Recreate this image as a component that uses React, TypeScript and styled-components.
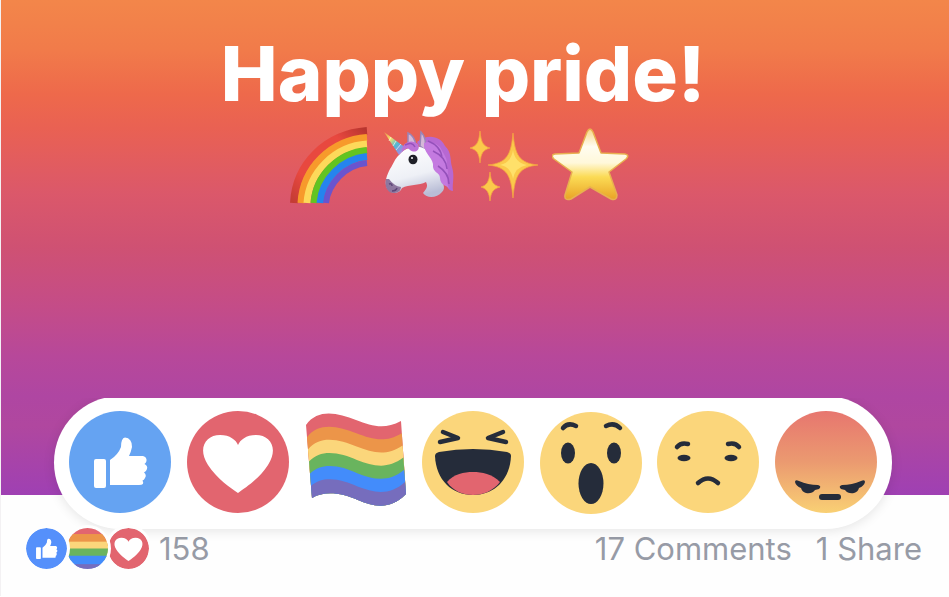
import React from "react";
import styled, { createGlobalStyle } from "styled-components";

const GlobalStyle = createGlobalStyle`
  * { box-sizing: border-box; }
  body { margin: 0; background: #fefefe; font-family: Inter, "Liberation Sans", sans-serif; }
`;

const Post = styled.article`
  border-left: 1px solid #f3f1f3;
  overflow: hidden;
`;
const Stage = styled.div`
  position: relative;
`;
const Hero = styled.section`
  display: flex;
  flex-direction: column;
  align-items: center;
  min-height: 495px;
  padding: 28px 24px 150px 0;
  background: linear-gradient(
    #f3864a 0%, #f17b4a 10%, #ee694b 19%, #e96153 26%, #db586a 39%,
    #cf5173 50%, #c44c88 62%, #b7489a 72%, #af46a2 80%, #b0479f 86%, #9f40b3 100%
  );
`;
const Title = styled.h1`
  margin: 0;
  color: #fff;
  font-size: 76px;
  font-weight: 800;
  line-height: 90px;
`;
const EmojiLine = styled.div`
  display: flex;
  gap: 8px;
  margin: 6px 6px 0 0;
`;
const Emoji = styled.svg`
  width: 80px;
  height: 84px;
  display: block;
`;
const Picker = styled.div`
  position: absolute;
  left: 53px;
  right: 57px;
  bottom: -34px;
  display: flex;
  align-items: center;
  justify-content: space-between;
  height: 133px;
  padding: 0 15px 1px;
  border-radius: 67px;
  background: #fff;
  box-shadow: 0 2px 12px rgba(0, 0, 0, 0.1);
  clip-path: inset(2px -24px -24px -24px);
`;
const Reaction = styled.button`
  width: 102px;
  height: 102px;
  padding: 0;
  border: 0;
  background: none;
  cursor: pointer;
`;
const Drawing = styled.svg`
  display: block;
  width: 100%;
  height: 100%;
  overflow: visible;
`;
const Footer = styled.footer`
  display: flex;
  align-items: center;
  justify-content: space-between;
  padding: 30px 27px 24px 22px;
  color: #979ba6;
  font-size: 31px;
  line-height: 46px;
`;
const Summary = styled.div`
  display: flex;
  align-items: center;
`;
const Badge = styled.span<{ $layer: number }>`
  position: relative;
  z-index: ${(p) => p.$layer};
  width: 47px;
  height: 47px;
  margin-right: -6px;
  border: 3px solid #fefefe;
  border-radius: 50%;
  overflow: hidden;
`;
const Count = styled.span`
  margin-left: 13px;
`;
const Links = styled.nav`
  display: flex;
  gap: 24px;
`;
const FooterLink = styled.a`
  color: inherit;
  text-decoration: none;
`;

const INK = "#252c3a";

const Thumb = () => (
  <g fill="#fff">
    <rect x="25" y="48" width="12" height="29" rx="2" />
    <path d="M41 49Q49 44 52 36Q52 27 56 26.500Q63 27 63 36Q62 41 60 45H74Q78 46 77.500 50Q77 52 75.500 53Q79 55 78 58Q77 61 75 61.500Q78 64 76 67Q75 69 73.500 69.500Q76 74 70 74H41Z" />
  </g>
);
const Like = ({ color = "#65a3f2" }: { color?: string }) => (
  <Drawing viewBox="0 0 102 102" aria-hidden>
    <circle cx="51" cy="51" r="51" fill={color} />
    <Thumb />
  </Drawing>
);
const Love = () => (
  <Drawing viewBox="0 0 102 102" aria-hidden>
    <circle cx="51" cy="51" r="51" fill="#e2656f" />
    <path d="M51 82C44 77 30 68 21 54C10 37 19 24 33 24C43 24 49 29 51 34C53 29 59 24 69 24C83 24 92 37 81 54C72 68 58 77 51 82Z" fill="#fff" />
  </Drawing>
);

const STRIPES = ["#e2656f", "#ec9549", "#fbd67b", "#69b45e", "#438cfb", "#766dbd"];

// Top edge of stripe i, from the pole side to the free side.
const waveTop = (i: number) => {
  const y = 13.3 * i;
  return `M${2 + i} ${14 + 12.2 * i}C${14 + i} ${-3 + y} ${34 + i} ${2 + y} ${52 + i * 0.3} ${9 + y}C${68 + i * 0.3} ${15 + y} ${80 + i} ${19 + y} ${97 + i * 0.8} ${10 + 12.2 * i}`;
};
const FLAG_BASE = "L102 83C86 99 70 96 54 89C38 82 21 79 8 87Z";

const Flag = () => (
  <Drawing viewBox="0 0 102 102" aria-hidden>
    {STRIPES.map((color, i) => (
      <path key={color} fill={color} d={waveTop(i) + FLAG_BASE} />
    ))}
  </Drawing>
);
const FlagBadge = () => (
  <Drawing viewBox="0 0 102 102" aria-hidden>
    {STRIPES.map((color, i) => (
      <rect key={color} y={[0, 15, 34, 51, 69, 90][i]} width="102" height="30" fill={color} />
    ))}
  </Drawing>
);
const Haha = () => (
  <Drawing viewBox="0 0 102 102" aria-hidden>
    <circle cx="51" cy="51" r="51" fill="#fbd67b" />
    <path d="M21 21L36 27L18 31M81 21L66 27L84 31" fill="none" stroke={INK} strokeWidth="4.500" strokeLinecap="round" strokeLinejoin="round" />
    <path d="M13 45Q13 42 17 41Q51 35 85 41Q89 42 89 45C88 69 72 84 51 84S14 69 13 45Z" fill={INK} />
    <path d="M25 71C32 63 42 61 51 61S70 63 78 71C71 80 61 84 51 84S31 80 25 71Z" fill="#e2656f" />
  </Drawing>
);
const Wow = () => (
  <Drawing viewBox="0 0 102 102" aria-hidden>
    <circle cx="51" cy="52" r="51" fill="#fbd67b" />
    <path d="M23 17Q28 11 36 15M66 15Q74 11 80 17" fill="none" stroke={INK} strokeWidth="4.500" strokeLinecap="round" />
    <g fill={INK}>
      <ellipse cx="28" cy="42" rx="7" ry="10.500" />
      <ellipse cx="74" cy="42" rx="7" ry="10.500" />
      <ellipse cx="51" cy="72.500" rx="12.500" ry="20.500" />
    </g>
  </Drawing>
);
const Sad = () => (
  <Drawing viewBox="0 0 102 102" aria-hidden>
    <circle cx="51" cy="51" r="51" fill="#fbd67b" />
    <path d="M20 36Q24 31 31 33M71 33Q78 31 82 36M41 72Q51 63 61 72" fill="none" stroke={INK} strokeWidth="4.500" strokeLinecap="round" />
    <ellipse cx="27" cy="47" rx="6.500" ry="3.200" fill={INK} />
    <ellipse cx="74" cy="47" rx="6.500" ry="3.200" fill={INK} />
  </Drawing>
);
const Angry = () => (
  <Drawing viewBox="0 0 102 102" aria-hidden>
    <defs>
      <linearGradient id="anger" x2="0" y2="1">
        <stop stopColor="#e7766f" />
        <stop offset="0.500" stopColor="#eb9a70" />
        <stop offset="1" stopColor="#f9d074" />
      </linearGradient>
    </defs>
    <circle cx="51" cy="51" r="51" fill="url(#anger)" />
    <path d="M20 71Q20 68 24 70Q33 74 43 74Q47 75 44 78L40 79Q37 83 31 82Q27 81 26 77Q21 75 20 71ZM90 71Q90 68 86 70Q77 74 67 74Q63 75 66 78L70 79Q73 83 79 82Q83 81 84 77Q89 75 90 71Z" fill={INK} />
    <rect x="44" y="83" width="22" height="6" rx="3" fill={INK} />
  </Drawing>
);

const Rainbow = () => (
  <Emoji viewBox="0 0 80 84" role="img" aria-label="Rainbow">
    <defs>
      <linearGradient id="redArc" x1="0" y1="1" x2="1" y2="0">
        <stop stopColor="#c43c34" />
        <stop offset="0.250" stopColor="#e8483f" />
        <stop offset="0.750" stopColor="#e8483f" />
        <stop offset="1" stopColor="#b8352f" />
      </linearGradient>
    </defs>
    <g fill="none" strokeWidth="7">
      <path d="M6 79C8 40 38 10 79 7" stroke="url(#redArc)" strokeWidth="8" />
      <path d="M13 79C15 44 43 16 79 13.500" stroke="#f79a2b" />
      <path d="M19 79C21 48 47 22 79 20" stroke="#fdd95a" />
      <path d="M26 79C28 52 50 29 79 26.500" stroke="#63c421" />
      <path d="M32 79C34 55 54 35 79 32.500" stroke="#2584ee" />
      <path d="M38 79C40 60 57 41 79 39" stroke="#6a54ce" strokeWidth="6" />
    </g>
  </Emoji>
);
const Unicorn = () => (
  <Emoji viewBox="-5 0 80 84" role="img" aria-label="Unicorn">
    <defs>
      <linearGradient id="coat" x1="0.200" y1="0" x2="0.500" y2="1">
        <stop stopColor="#fff" />
        <stop offset="0.600" stopColor="#eef0f6" />
        <stop offset="1" stopColor="#b9bdd6" />
      </linearGradient>
      <linearGradient id="horn" x2="1" y2="1">
        <stop stopColor="#e88a4c" />
        <stop offset="0.300" stopColor="#f6e06b" />
        <stop offset="0.550" stopColor="#50b9d4" />
        <stop offset="0.800" stopColor="#9b8fe0" />
        <stop offset="1" stopColor="#e9a3df" />
      </linearGradient>
    </defs>
    <path d="M36 18C46 9 60 12 64 22C71 28 69 37 71 43C74 53 71 59 72 67C68 67 66 63 64 58L52 46Z" fill="#b768d2" />
    <path d="M27 23L27 9Q34 12 35 22ZM39 22L40 8Q46 14 44 26Z" fill="#d5b8d8" stroke="#9985b8" strokeWidth="1.500" />
    <path d="M18 31C25 22 40 19 49 29C58 36 61 43 60 53C62 60 65 64 61 68C56 74 46 75 42 69C46 64 47 62 45 58C38 62 28 60 21 64C18 71 9 70 6 64C3 58 6 51 9 45C13 39 13 36 18 31Z" fill="url(#coat)" />
    <path d="M5 55C3 63 7 70 14 69Q20 68 20 63Q13 62 8 55Z" fill="#8e779f" />
    <path d="M8 60Q11 59 11 62M11 67Q15 67 16 64" fill="none" stroke="#5c4678" strokeWidth="1.500" />
    <path d="M3 8L25 24L18 31Z" fill="url(#horn)" />
    <path d="M10 13L8 17M15 17L12 22M20 20L15 26" stroke="#fff" strokeOpacity="0.600" />
    <path d="M21 28C20 19 30 14 37 20C40 26 34 30 29 26C26 23 24 25 21 28Z" fill="#bd72d6" />
    <path d="M43 19C42 28 51 33 52 40C51 49 59 48 59 54C59 61 66 62 68 64C64 55 69 53 66 43C67 34 63 31 59 23Q51 16 43 19Z" fill="#c47ae0" />
    <path d="M47 17Q60 22 61 34M52 27Q65 33 66 45M57 42Q68 49 68 60M24 21Q31 17 34 23" fill="none" stroke="#9551bb" strokeWidth="1.500" />
    <ellipse cx="32" cy="35.500" rx="4.500" ry="4.800" fill="#1f2028" />
    <circle cx="31" cy="34" r="1" fill="#fff" />
  </Emoji>
);
const Sparkles = () => (
  <Emoji viewBox="-6 0 80 84" role="img" aria-label="Sparkles">
    <g fill="#fbc94b" stroke="#f4a343" strokeWidth="0.800">
      <path d="M43 9C45 31 49 39 68 41C49 43 45 51 43 74C41 51 37 43 18 41C37 39 41 31 43 9Z" />
      <path d="M10 7C11 18 13 22 20 24C13 26 11 29 10 39C9 29 7 26 0 24C7 22 9 18 10 7Z" />
      <path d="M20 48C21 58 23 61 30 63C23 65 21 68 20 77C19 68 17 65 11 63C17 61 19 58 20 48Z" />
    </g>
    <path d="M43 26Q45 39 57 41Q45 43 43 55Q41 43 30 41Q41 39 43 26Z" fill="#ffe06a" />
  </Emoji>
);
const Star = () => (
  <Emoji viewBox="2 0 80 84" role="img" aria-label="Star">
    <defs>
      <linearGradient id="gold" x2="0" y2="1">
        <stop stopColor="#f8d88a" />
        <stop offset="0.250" stopColor="#fffdf0" />
        <stop offset="0.480" stopColor="#fff8da" />
        <stop offset="0.680" stopColor="#fbdb55" />
        <stop offset="1" stopColor="#e9a326" />
      </linearGradient>
    </defs>
    <path d="M37 8Q40 2 43 8L51 29L75 30Q80 31 76 35L59 48L67 71Q67 77 61 75L40 63L21 75Q14 77 15 71L22 48L4 35Q0 31 5 30L29 29Z" fill="url(#gold)" stroke="#e8b050" strokeWidth="1.500" strokeLinejoin="round" />
  </Emoji>
);

const REACTIONS = [
  { name: "Like", Icon: Like },
  { name: "Love", Icon: Love },
  { name: "Pride", Icon: Flag },
  { name: "Haha", Icon: Haha },
  { name: "Wow", Icon: Wow },
  { name: "Sad", Icon: Sad },
  { name: "Angry", Icon: Angry },
];

export default function App() {
  return (
    <>
      <GlobalStyle />
      <Post>
        <Stage>
          <Hero>
            <Title>Happy pride!</Title>
            <EmojiLine>
              <Rainbow />
              <Unicorn />
              <Sparkles />
              <Star />
            </EmojiLine>
          </Hero>
          <Picker role="group" aria-label="Reactions">
            {REACTIONS.map(({ name, Icon }) => (
              <Reaction key={name} type="button" aria-label={name}>
                <Icon />
              </Reaction>
            ))}
          </Picker>
        </Stage>
        <Footer>
          <Summary>
            <Badge $layer={3}><Like color="#5590fb" /></Badge>
            <Badge $layer={2}><FlagBadge /></Badge>
            <Badge $layer={1}><Love /></Badge>
            <Count>158</Count>
          </Summary>
          <Links aria-label="Activity">
            <FooterLink href="#comments">17 Comments</FooterLink>
            <FooterLink href="#shares">1 Share</FooterLink>
          </Links>
        </Footer>
      </Post>
    </>
  );
}
